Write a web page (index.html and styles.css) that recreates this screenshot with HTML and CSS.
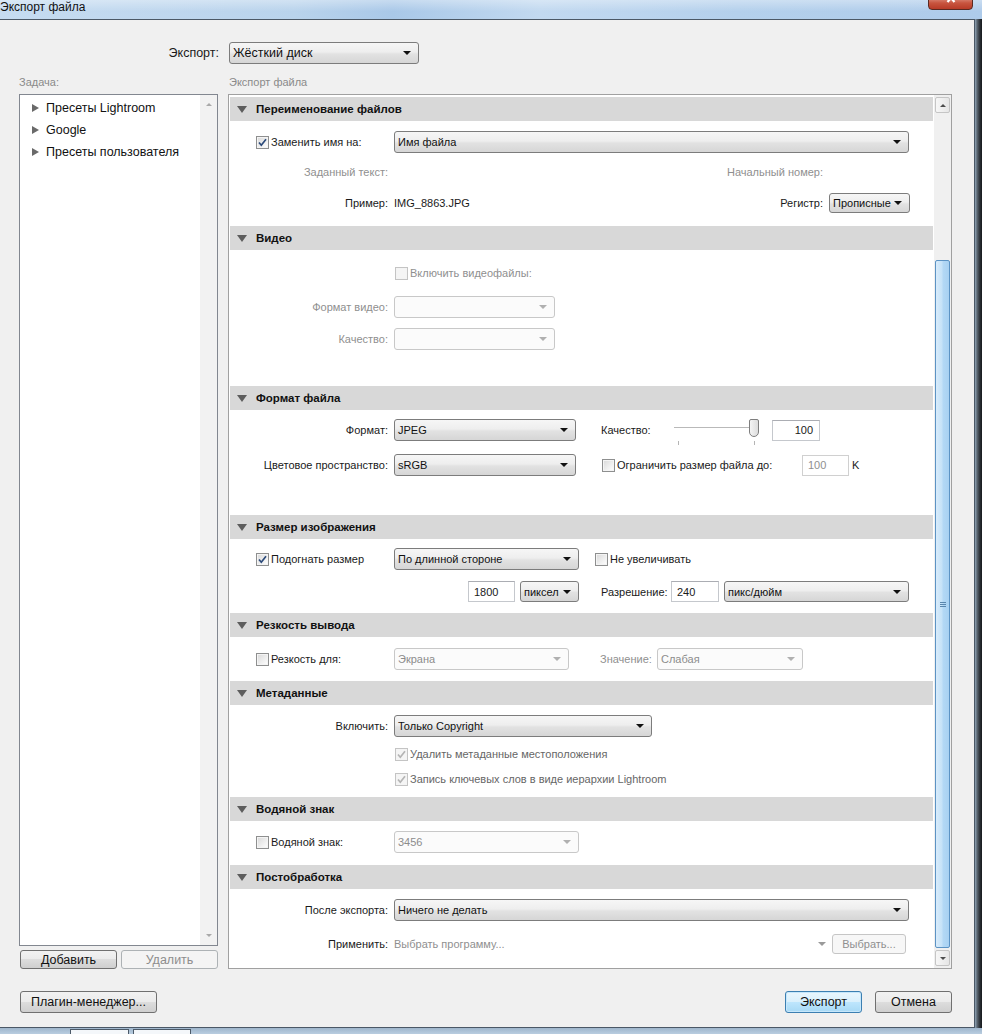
FILE: index.html
```html
<!DOCTYPE html>
<html lang="ru">
<head>
<meta charset="utf-8">
<title>Экспорт файла</title>
<link rel="stylesheet" href="styles.css">
</head>
<body>
<div class="screen">
  <div class="titlebar">
    <span class="title">Экспорт файла</span>
    <div class="close"><svg width="12" height="9" viewBox="0 0 12 9"><path d="M2.5 -3 L9.5 5 M9.5 -3 L2.5 5" stroke="#fff" stroke-width="2.2" fill="none"/></svg></div>
  </div>
  <div class="win">
    <div class="dialog">
      <div class="export-row">
        <span class="export-label">Экспорт:</span>
        <div class="select sel-export"><span>Жёсткий диск</span><i class="arr"></i></div>
      </div>
      <div class="caption-row">
        <span class="cap cap-left">Задача:</span>
        <span class="cap">Экспорт файла</span>
      </div>
      <div class="main">
        <div class="left">
          <div class="listbox">
            <ul class="tree">
              <li><i class="tri-r"></i>Пресеты Lightroom</li>
              <li><i class="tri-r"></i>Google</li>
              <li><i class="tri-r"></i>Пресеты пользователя</li>
            </ul>
            <div class="lscroll"><i class="caret up"></i><i class="caret down"></i></div>
          </div>
          <div class="left-btns">
            <div class="btn small">Добавить</div>
            <div class="btn small disabled">Удалить</div>
          </div>
        </div>

        <div class="panel">
          <div class="sections">
            <!-- 1 -->
            <div class="sec-h"><i class="tri-d"></i>Переименование файлов</div>
            <div class="body b1">
              <div class="row">
                <div class="c1 cbcol"><span class="cb checked"><svg viewBox="0 0 11 11"><path d="M2 5.5 L4.3 8.2 L9 2.2" /></svg></span><span class="cbl">Заменить имя на:</span></div>
                <div class="select w515"><span>Имя файла</span><i class="arr"></i></div>
              </div>
              <div class="row mt8">
                <div class="c1 grey">Заданный текст:</div>
                <span class="grey push mr110">Начальный номер:</span>
              </div>
              <div class="row mt9">
                <div class="c1">Пример:</div>
                <span>IMG_8863.JPG</span>
                <span class="push">Регистр:</span>
                <div class="select w81 h20 ml6 mr23"><span>Прописные</span><i class="arr"></i></div>
              </div>
            </div>

            <!-- 2 -->
            <div class="sec-h"><i class="tri-d"></i>Видео</div>
            <div class="body b2">
              <div class="row">
                <div class="indent"></div>
                <span class="cb dis"></span><span class="cbl grey">Включить видеофайлы:</span>
              </div>
              <div class="row mt12">
                <div class="c1 grey">Формат видео:</div>
                <div class="select dis w161"><span></span><i class="arr"></i></div>
              </div>
              <div class="row mt10">
                <div class="c1 grey">Качество:</div>
                <div class="select dis w161"><span></span><i class="arr"></i></div>
              </div>
            </div>

            <!-- 3 -->
            <div class="sec-h"><i class="tri-d"></i>Формат файла</div>
            <div class="body b3">
              <div class="row">
                <div class="c1">Формат:</div>
                <div class="select w182"><span>JPEG</span><i class="arr"></i></div>
                <span class="qlabel">Качество:</span>
                <div class="slider">
                  <div class="track"></div>
                  <div class="thumb"></div>
                  <i class="tick t1"></i><i class="tick t2"></i>
                </div>
                <div class="inp w48 right ml13">100</div>
              </div>
              <div class="row mt13">
                <div class="c1">Цветовое пространство:</div>
                <div class="select w182"><span>sRGB</span><i class="arr"></i></div>
                <div class="limit"><span class="cb"></span><span class="cbl">Ограничить размер файла до:</span></div>
                <div class="inp w47 dis-inp">100</div>
                <span class="kb">K</span>
              </div>
            </div>

            <!-- 4 -->
            <div class="sec-h"><i class="tri-d"></i>Размер изображения</div>
            <div class="body b4">
              <div class="row">
                <div class="c1 cbcol"><span class="cb checked"><svg viewBox="0 0 11 11"><path d="M2 5.5 L4.3 8.2 L9 2.2" /></svg></span><span class="cbl">Подогнать размер</span></div>
                <div class="select w185"><span>По длинной стороне</span><i class="arr"></i></div>
                <span class="cb ml16"></span><span class="cbl">Не увеличивать</span>
              </div>
              <div class="row mt11 h21">
                <div class="inp w47 ml238">1800</div>
                <div class="select w59 h21 ml5"><span>пиксел</span><i class="arr"></i></div>
                <span class="reslabel">Разрешение:</span>
                <div class="inp w48">240</div>
                <div class="select w185 h21 ml5"><span>пикс/дюйм</span><i class="arr"></i></div>
              </div>
            </div>

            <!-- 5 -->
            <div class="sec-h"><i class="tri-d"></i>Резкость вывода</div>
            <div class="body b5">
              <div class="row">
                <div class="c1 cbcol"><span class="cb"></span><span class="cbl">Резкость для:</span></div>
                <div class="select dis w175"><span>Экрана</span><i class="arr"></i></div>
                <span class="grey vallabel">Значение:</span>
                <div class="select dis w146"><span>Слабая</span><i class="arr"></i></div>
              </div>
            </div>

            <!-- 6 -->
            <div class="sec-h"><i class="tri-d"></i>Метаданные</div>
            <div class="body b6">
              <div class="row">
                <div class="c1">Включить:</div>
                <div class="select w258"><span>Только Copyright</span><i class="arr"></i></div>
              </div>
              <div class="row h20 mt7">
                <div class="indent"></div>
                <span class="cb dis checked"><svg viewBox="0 0 11 11"><path d="M2 5.5 L4.3 8.2 L9 2.2" /></svg></span><span class="cbl meta">Удалить метаданные местоположения</span>
              </div>
              <div class="row h20 mt5">
                <div class="indent"></div>
                <span class="cb dis checked"><svg viewBox="0 0 11 11"><path d="M2 5.5 L4.3 8.2 L9 2.2" /></svg></span><span class="cbl meta">Запись ключевых слов в виде иерархии Lightroom</span>
              </div>
            </div>

            <!-- 7 -->
            <div class="sec-h"><i class="tri-d"></i>Водяной знак</div>
            <div class="body b7">
              <div class="row">
                <div class="c1 cbcol"><span class="cb"></span><span class="cbl">Водяной знак:</span></div>
                <div class="select dis w185"><span>3456</span><i class="arr"></i></div>
              </div>
            </div>

            <!-- 8 -->
            <div class="sec-h"><i class="tri-d"></i>Постобработка</div>
            <div class="body b8">
              <div class="row">
                <div class="c1">После экспорта:</div>
                <div class="select w515"><span>Ничего не делать</span><i class="arr"></i></div>
              </div>
              <div class="row h21 mt12">
                <div class="c1">Применить:</div>
                <span class="grey">Выбрать программу...</span>
                <i class="mini-arr push"></i>
                <div class="btn choose">Выбрать...</div>
              </div>
            </div>
          </div>

          <div class="vscroll">
            <div class="sbtn"><i class="sarr up"></i></div>
            <div class="strack">
              <div class="sthumb"><i></i><i></i><i></i></div>
            </div>
            <div class="sbtn"><i class="sarr down"></i></div>
          </div>
        </div>
      </div>

      <div class="bottom">
        <div class="btn plugin">Плагин-менеджер...</div>
        <div class="btn primary">Экспорт</div>
        <div class="btn cancel">Отмена</div>
      </div>
    </div>
    <div class="frame-r"></div>
  </div>
  <div class="frame-b">
    <div class="tab t-a"></div>
    <div class="tab t-b"></div>
  </div>
</div>
</body>
</html>
```

FILE: styles.css
```css
html, body { margin: 0; padding: 0; }
body {
  background: #f0f0f0;
  font-family: "Liberation Sans", Arial, sans-serif;
  font-size: 12px;
  color: #1a1a1a;
}
.screen {
  width: 982px;
  height: 1034px;
  overflow: hidden;
  position: relative;
  background: #f0f0f0;
}

/* title bar */
.titlebar {
  height: 19px;
  position: relative;
  background:
    linear-gradient(180deg, rgba(255,255,255,0.35), rgba(255,255,255,0) 60%),
    linear-gradient(90deg, #c6dcf1 0%, #b9d3ec 30%, #a9c8e8 40%, #c2d9f0 55%, #b4d0ec 75%, #aecbea 100%);
}
.title {
  display: block;
  line-height: 14px;
  font-size: 12px;
  color: #111;
  padding-left: 0;
}
.close {
  position: absolute;
  left: 928px;
  top: -4px;
  width: 45px;
  height: 14px;
  border: 1px solid #5a2a22;
  border-radius: 0 0 4px 4px;
  background: linear-gradient(#e29a8a, #c8553f 50%, #b83b27);
  display: flex;
  justify-content: center;
  align-items: flex-end;
  padding-bottom: 3px;
  box-sizing: border-box;
  overflow: hidden;
}
.close svg { overflow: hidden; }

.win {
  display: flex;
  height: 1009px;
}
.dialog {
  width: 975px;
  height: 1009px;
  box-sizing: border-box;
  border-top: 1px solid #4b5866;
  border-right: 1px solid #4b5866;
  border-bottom: 1px solid #4b5866;
  padding: 21px 22px 0 19px;
  background: #f0f0f0;
  display: flex;
  flex-direction: column;
}
.frame-r {
  width: 7px;
  background: linear-gradient(90deg, #8fa3b5 0%, #55606b 35%, #2b3036 70%, #16191c 100%);
}
.frame-b {
  height: 6px;
  display: flex;
  background: linear-gradient(#9fb6cc, #b9cde0);
}
.frame-b .tab {
  height: 6px;
  margin-top: 1px;
  background: #f4f7fa;
  border: 1px solid #4c5a68;
  border-bottom: 0;
  box-sizing: border-box;
}
.t-a { margin-left: 70px; width: 59px; }
.t-b { margin-left: 4px; width: 58px; }

/* export row */
.export-row {
  display: flex;
  align-items: center;
  height: 23px;
}
.export-label {
  width: 200px;
  text-align: right;
  font-size: 12.5px;
  padding-right: 10px;
  flex: none;
}
.sel-export {
  width: 190px;
  height: 23px;
  font-size: 12.5px;
}

.caption-row {
  display: flex;
  padding-top: 11px;
  height: 19px;
  line-height: 14px;
}
.cap { color: #8a8a8a; font-size: 11px; }
.cap-left { width: 210px; }

/* main */
.main {
  display: flex;
  height: 875px;
  gap: 10px;
}
.left {
  width: 200px;
  display: flex;
  flex-direction: column;
}
.listbox {
  height: 852px;
  box-sizing: border-box;
  border: 1px solid #828790;
  background: #fff;
  display: flex;
}
.tree {
  list-style: none;
  margin: 0;
  padding: 2px 0 0 12px;
  flex: 1;
}
.tree li {
  height: 22px;
  display: flex;
  align-items: center;
  font-size: 12.5px;
  color: #111;
}
.tri-r {
  width: 0; height: 0;
  border-top: 4px solid transparent;
  border-bottom: 4px solid transparent;
  border-left: 7px solid #6a6a6a;
  margin-right: 7px;
}
.lscroll {
  width: 17px;
  background: #f2f2f2;
  display: flex;
  flex-direction: column;
  justify-content: space-between;
  align-items: center;
  padding: 8px 0 8px;
  box-sizing: border-box;
}
.caret { width: 0; height: 0; border-left: 3px solid transparent; border-right: 3px solid transparent; }
.caret.up { border-bottom: 3px solid #a9a9a9; }
.caret.down { border-top: 3px solid #a9a9a9; }

.left-btns {
  display: flex;
  gap: 4px;
  margin-top: 4px;
  padding-left: 1px;
}

/* buttons */
.btn {
  height: 22px;
  box-sizing: border-box;
  border: 1px solid #707070;
  border-radius: 3px;
  background: linear-gradient(#f2f2f2 0%, #ebebeb 49%, #dddddd 50%, #cfcfcf 100%);
  display: flex;
  align-items: center;
  justify-content: center;
  font-size: 12.5px;
  color: #111;
  flex: none;
}
.btn.small { width: 97px; height: 19px; }
.btn.disabled {
  border-color: #adb2b5;
  background: #f4f4f4;
  color: #8d8d8d;
}
.bottom {
  display: flex;
  margin-top: 22px;
  padding-left: 1px;
}
.plugin { width: 137px; }
.primary {
  width: 77px;
  margin-left: auto;
  border-color: #3c7fb1;
  background: linear-gradient(#eaf6fd 0%, #d9f0fc 49%, #bee6fd 50%, #a7d9f5 100%);
  box-shadow: inset 0 0 0 1px #c6e7fb;
}
.cancel { width: 77px; margin-left: 13px; }

/* panel */
.panel {
  width: 724px;
  height: 875px;
  box-sizing: border-box;
  border: 1px solid #a0a0a0;
  background: #fff;
  display: flex;
}
.sections {
  width: 705px;
  padding: 2px 1px 0;
  box-sizing: border-box;
  overflow: hidden;
  font-size: 11px;
}
.sec-h {
  height: 24px;
  background: #d8d8d8;
  display: flex;
  align-items: center;
  padding-left: 7px;
  font-weight: bold;
  font-size: 11.5px;
  color: #111;
}
.tri-d {
  width: 0; height: 0;
  border-left: 5px solid transparent;
  border-right: 5px solid transparent;
  border-top: 7px solid #5d5d5d;
  margin-right: 9px;
}
.body { display: flex; flex-direction: column; }
.b1 { padding: 10px 0 12px; }
.b2 { padding: 12px 0 36px; }
.b3 { padding: 9px 0 39px; }
.b4 { padding: 9px 0 11px; }
.b5 { padding: 11px 0 11px; }
.b6 { padding: 10px 0 8px; }
.b7 { padding: 10px 0 12px; }
.b8 { padding: 10px 0 0; }

.row {
  display: flex;
  align-items: center;
  height: 22px;
  white-space: nowrap;
}
.row.h20 { height: 20px; }
.row.h21 { height: 21px; }
.mt5 { margin-top: 5px; }
.mt7 { margin-top: 7px; }
.mt8 { margin-top: 8px; }
.mt9 { margin-top: 9px; }
.mt10 { margin-top: 10px; }
.mt11 { margin-top: 11px; }
.mt12 { margin-top: 12px; }
.mt13 { margin-top: 13px; }

.c1 {
  width: 164px;
  flex: none;
  box-sizing: border-box;
  padding-right: 6px;
  display: flex;
  justify-content: flex-end;
  align-items: center;
}
.c1.cbcol { justify-content: flex-start; padding-left: 26px; }
.indent { width: 165px; flex: none; }
.grey { color: #8f8f8f; }
.push { margin-left: auto; }
.mr110 { margin-right: 110px; }
.mr23 { margin-right: 23px; }
.ml5 { margin-left: 5px; }
.ml6 { margin-left: 6px; }
.ml13 { margin-left: 13px; }
.ml16 { margin-left: 16px; }
.ml238 { margin-left: 238px; }

/* checkbox */
.cb {
  width: 13px; height: 13px;
  box-sizing: border-box;
  border: 1px solid #8e8f8f;
  background: linear-gradient(135deg, #d8d8d8 0%, #f0f0f0 60%, #ffffff 100%);
  box-shadow: inset 0 0 0 1px #f4f4f4;
  flex: none;
  display: flex;
}
.cb svg { width: 11px; height: 11px; }
.cb svg path { fill: none; stroke: #2b4a7a; stroke-width: 1.7; }
.cb.dis { border-color: #c4c4c4; background: #f5f5f5; }
.cb.dis svg path { stroke: #b4b4b4; }
.cbl { margin-left: 2px; }
.meta { color: #666; }

/* select */
.select {
  display: flex;
  align-items: center;
  height: 22px;
  box-sizing: border-box;
  border: 1px solid #7c7c7c;
  border-radius: 3px;
  background: linear-gradient(#f6f6f6 0%, #eeeeee 45%, #e2e2e2 55%, #d6d6d6 100%);
  padding-left: 3px;
  flex: none;
  color: #111;
}
.select .arr {
  margin-left: auto;
  margin-right: 7px;
  width: 0; height: 0;
  border-left: 4px solid transparent;
  border-right: 4px solid transparent;
  border-top: 4px solid #111;
}
.select.dis {
  border-color: #c8c8c8;
  background: #fbfbfb;
  color: #8c8c8c;
}
.select.dis .arr { border-top-color: #b0b0b0; }
.select.h20 { height: 20px; }
.select.h21 { height: 21px; }
.w59 { width: 59px; }
.w81 { width: 81px; }
.w146 { width: 146px; }
.w161 { width: 161px; }
.w175 { width: 175px; }
.w182 { width: 182px; }
.w185 { width: 185px; }
.w258 { width: 258px; }
.w515 { width: 515px; }
.w47 { width: 47px; }
.w48 { width: 48px; }

/* input */
.inp {
  height: 21px;
  box-sizing: border-box;
  border: 1px solid #c5c8cd;
  border-top-color: #abadb3;
  background: #fff;
  display: flex;
  align-items: center;
  padding: 0 5px;
  flex: none;
}
.inp.right { justify-content: flex-end; padding-right: 6px; }
.dis-inp { color: #8f8f8f; border-color: #d0d0d0; }

.qlabel { margin-left: 25px; width: 73px; flex: none; }
.slider {
  width: 85px;
  height: 22px;
  position: relative;
  flex: none;
}
.slider .track {
  position: absolute;
  left: 0; right: 6px; top: 8px;
  height: 0;
  border-top: 1px solid #b9b9b9;
  border-bottom: 1px solid #ffffff;
}
.slider .thumb {
  position: absolute;
  left: 75px; top: 0;
  width: 10px; height: 18px;
  box-sizing: border-box;
  border: 1px solid #7e7e7e;
  border-radius: 2px 2px 5px 5px;
  background: linear-gradient(90deg, #f4f4f4, #dcdcdc);
}
.slider .tick {
  position: absolute;
  top: 22px;
  width: 1px; height: 4px;
  background: #b5b5b5;
}
.tick.t1 { left: 4px; }
.tick.t2 { left: 80px; }

.limit {
  margin-left: 26px;
  width: 200px;
  flex: none;
  display: flex;
  align-items: center;
}
.kb { margin-left: 3px; }
.reslabel { margin-left: 22px; width: 70px; flex: none; }
.vallabel { margin-left: 31px; width: 57px; flex: none; }

.mini-arr {
  width: 0; height: 0;
  border-left: 4px solid transparent;
  border-right: 4px solid transparent;
  border-top: 4px solid #9a9a9a;
}
.btn.choose {
  width: 74px;
  height: 20px;
  margin-left: 6px;
  margin-right: 27px;
  font-size: 11px;
  border-color: #c6c6c6;
  background: #f7f7f7;
  color: #8f8f8f;
}

/* vertical scrollbar */
.vscroll {
  width: 17px;
  display: flex;
  flex-direction: column;
  padding: 2px 0;
  box-sizing: border-box;
  background: #f0f0f0;
}
.sbtn {
  height: 16px;
  margin: 0 1px;
  box-sizing: border-box;
  border: 1px solid #c5c5c5;
  border-radius: 2px;
  background: linear-gradient(90deg, #f7f7f7, #e6e6e6);
  display: flex;
  align-items: center;
  justify-content: center;
  flex: none;
}
.sarr { width: 0; height: 0; border-left: 3px solid transparent; border-right: 3px solid transparent; }
.sarr.up { border-bottom: 3px solid #4d4d4d; }
.sarr.down { border-top: 3px solid #4d4d4d; }
.strack {
  flex: 1;
  display: flex;
  flex-direction: column;
  padding-top: 147px;
  padding-bottom: 2px;
}
.sthumb {
  flex: 1;
  margin: 0 1px;
  box-sizing: border-box;
  border: 1px solid #5c93c4;
  border-radius: 2px;
  background: linear-gradient(90deg, #d9ecfb 0%, #c5e2f8 45%, #b3d8f5 55%, #a8d1f2 100%);
  display: flex;
  flex-direction: column;
  justify-content: center;
  align-items: center;
  gap: 1px;
}
.sthumb i {
  width: 6px;
  height: 1px;
  background: #5a86ad;
}
```
